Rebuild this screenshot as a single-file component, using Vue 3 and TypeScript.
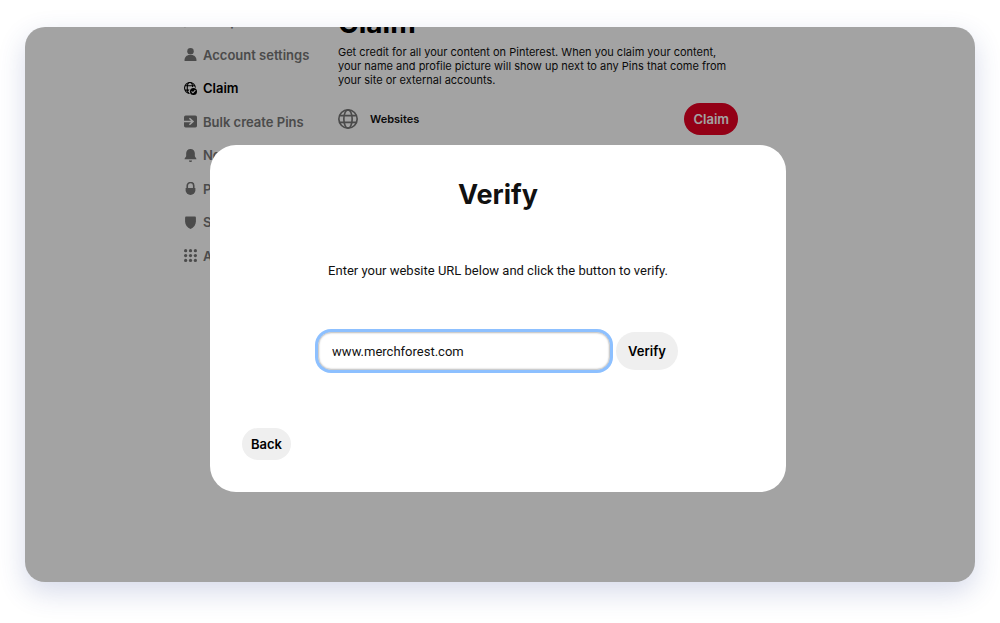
<script setup lang="ts">
import { ref } from 'vue'

interface NavItem {
  id: string
  label: string
  active?: boolean
}

const items: NavItem[] = [
  { id: 'edit', label: 'Edit profile' },
  { id: 'account', label: 'Account settings' },
  { id: 'claim', label: 'Claim', active: true },
  { id: 'bulk', label: 'Bulk create Pins' },
  { id: 'bell', label: 'Notifications' },
  { id: 'lock', label: 'Privacy and data' },
  { id: 'shield', label: 'Security' },
  { id: 'apps', label: 'Apps' },
]

const dots = [3, 12, 21]
const url = ref('www.merchforest.com')
</script>

<template>
  <div class="stage">
    <div class="window">
      <div class="page">
        <nav class="sidebar" aria-label="Settings">
          <a
            v-for="item in items"
            :key="item.id"
            href="#"
            class="nav-item"
            :class="{ active: item.active }"
          >
            <svg class="nav-icon" viewBox="0 0 24 24" fill="currentColor" aria-hidden="true">
              <path v-if="item.id === 'edit'" d="M14 6l4 4L7 21l-6 2 2-6zM16 4l2-2c1-1 2-1 3 0l1 1c1 1 1 2 0 3l-2 2z" />
              <template v-else-if="item.id === 'account'">
                <circle cx="12" cy="6" r="6" />
                <path d="M1 24v-2c0-5 4-9 9-9h4c5 0 9 4 9 9v2z" />
              </template>
              <template v-else-if="item.id === 'claim'">
                <g fill="none" stroke="currentColor" stroke-width="2">
                  <circle cx="11" cy="11" r="10" />
                  <ellipse cx="11" cy="11" rx="5" ry="10" />
                  <path d="M2 7h18M2 15h18" />
                </g>
                <circle cx="17" cy="17" r="8" fill="#fff" />
                <circle cx="17.5" cy="17.5" r="6.5" />
                <path d="M14 17.5l2.5 2.5 4.5-5" fill="none" stroke="#fff" stroke-width="2" />
              </template>
              <template v-else-if="item.id === 'bulk'">
                <rect y="1" width="24" height="22" rx="3" />
                <path d="M0 12h16M10 6l6.5 6-6.5 6" fill="none" stroke="#fff" stroke-width="3" />
              </template>
              <path
                v-else-if="item.id === 'bell'"
                d="M12 0c-5 0-8 4-8 8v5c0 2-3 3-3 6h22c0-3-3-4-3-6V8c0-4-3-8-8-8zM9 21a3 3 0 0 0 6 0z"
              />
              <template v-else-if="item.id === 'lock'">
                <path d="M6 13V7a6 6 0 0 1 12 0v6" fill="none" stroke="currentColor" stroke-width="3" />
                <path d="M3 11h18v4a9 9 0 0 1-18 0z" />
              </template>
              <path v-else-if="item.id === 'shield'" d="M4 1h16c1 0 2 1 2 2v7c0 6-4 11-10 14C6 21 2 16 2 10V3c0-1 1-2 2-2z" />
              <template v-else>
                <template v-for="y in dots" :key="y">
                  <circle v-for="x in dots" :key="x" :cx="x" :cy="y" r="3" />
                </template>
              </template>
            </svg>
            <span>{{ item.label }}</span>
          </a>
        </nav>

        <main class="content">
          <h1>Claim</h1>
          <p class="intro">
            Get credit for all your content on Pinterest. When you claim your content, your name and
            profile picture will show up next to any Pins that come from your site or external accounts.
          </p>
          <div class="site-row">
            <svg class="globe" viewBox="0 0 24 24" fill="none" stroke="currentColor" stroke-width="2" aria-hidden="true">
              <circle cx="12" cy="12" r="11" />
              <ellipse cx="12" cy="12" rx="5" ry="11" />
              <path d="M2 8h20M2 16h20" />
            </svg>
            <h2>Websites</h2>
            <button type="button" class="claim-button">Claim</button>
          </div>
        </main>
      </div>

      <div class="overlay">
        <form class="dialog" role="dialog" aria-labelledby="dialog-title" @submit.prevent>
          <h2 id="dialog-title">Verify</h2>
          <label for="site-url">Enter your website URL below and click the button to verify.</label>
          <div class="field-row">
            <input id="site-url" v-model="url" type="text" spellcheck="false" />
            <button type="submit" class="verify-button">Verify</button>
          </div>
          <button type="button" class="back-button">Back</button>
        </form>
      </div>
    </div>
  </div>
</template>

<style>
body {
  background: #fff;
}
</style>

<style scoped>
.stage {
  box-sizing: border-box;
  display: flex;
  min-height: 100vh;
  padding: 27px 25px 41px;
  font-family: Inter, "Liberation Sans", sans-serif;
  color: #111;
}

.window {
  position: relative;
  flex: 1;
  overflow: hidden;
  border-radius: 20px;
  background: #fff;
  box-shadow: 0 10px 28px rgba(50, 70, 150, 0.2);
}

.page {
  display: flex;
  gap: 24px;
  margin-top: -16px;
  padding: 0 237px 0 159px;
}

.sidebar {
  display: flex;
  flex: none;
  flex-direction: column;
  justify-content: space-between;
  width: 130px;
  height: 255px;
}

.nav-item {
  display: flex;
  align-items: center;
  gap: 6px;
  font-size: 13px;
  font-weight: 600;
  line-height: 20px;
  white-space: nowrap;
  text-decoration: none;
  color: #767676;
}

.nav-item.active {
  color: #000;
}

.nav-icon {
  flex: none;
  width: 13px;
  height: 13px;
}

.content {
  flex: 1;
  min-width: 0;
}

h1,
h2,
p {
  margin: 0;
}

h1 {
  font-size: 28px;
  line-height: 24px;
  font-weight: 700;
  color: #000;
}

.intro {
  margin-top: 10px;
  font-size: 11px;
  line-height: 14px;
}

.site-row {
  display: flex;
  align-items: center;
  margin-top: 16px;
}

.globe {
  width: 20px;
  height: 20px;
  color: #767676;
}

.site-row h2 {
  flex: 1;
  margin-left: 12px;
  font-size: 11px;
  font-weight: 600;
}

button {
  border: 0;
  border-radius: 24px;
  background: #efefef;
  color: #000;
  font-family: inherit;
  font-size: 13px;
  font-weight: 600;
}

.site-row .claim-button {
  height: 32px;
  padding: 0 9px;
  background: #e60023;
  color: #fff;
}

.overlay {
  position: absolute;
  inset: 0;
  display: flex;
  align-items: flex-start;
  justify-content: center;
  padding: 118px 4px 0 0;
  background: rgba(0, 0, 0, 0.36);
}

.dialog {
  box-sizing: border-box;
  display: flex;
  flex-direction: column;
  align-items: center;
  width: 576px;
  max-width: 100%;
  padding: 32px;
  border-radius: 26px;
  background: #fff;
}

.dialog h2 {
  font-size: 27px;
  line-height: 36px;
  font-weight: 700;
}

.dialog label {
  margin-top: 49px;
  font-family: Roboto, "Liberation Sans", sans-serif;
  font-size: 13px;
  line-height: 18px;
}

.field-row {
  display: flex;
  align-items: center;
  gap: 6px;
  margin-top: 52px;
}

input {
  box-sizing: border-box;
  width: 292px;
  height: 38px;
  padding: 0 13px;
  border: 1px solid #cdcdcd;
  border-radius: 13px;
  outline: 0;
  box-shadow: 0 0 0 3px #8dc0ff, inset 0 0 2px #bbb;
  background: #fff;
  color: #111;
  font-family: Roboto, "Liberation Sans", sans-serif;
  font-size: 13px;
}

.verify-button {
  height: 38px;
  padding: 0 12px;
}

.back-button {
  align-self: flex-start;
  height: 32px;
  margin-top: 58px;
  padding: 0 9px;
}
</style>
